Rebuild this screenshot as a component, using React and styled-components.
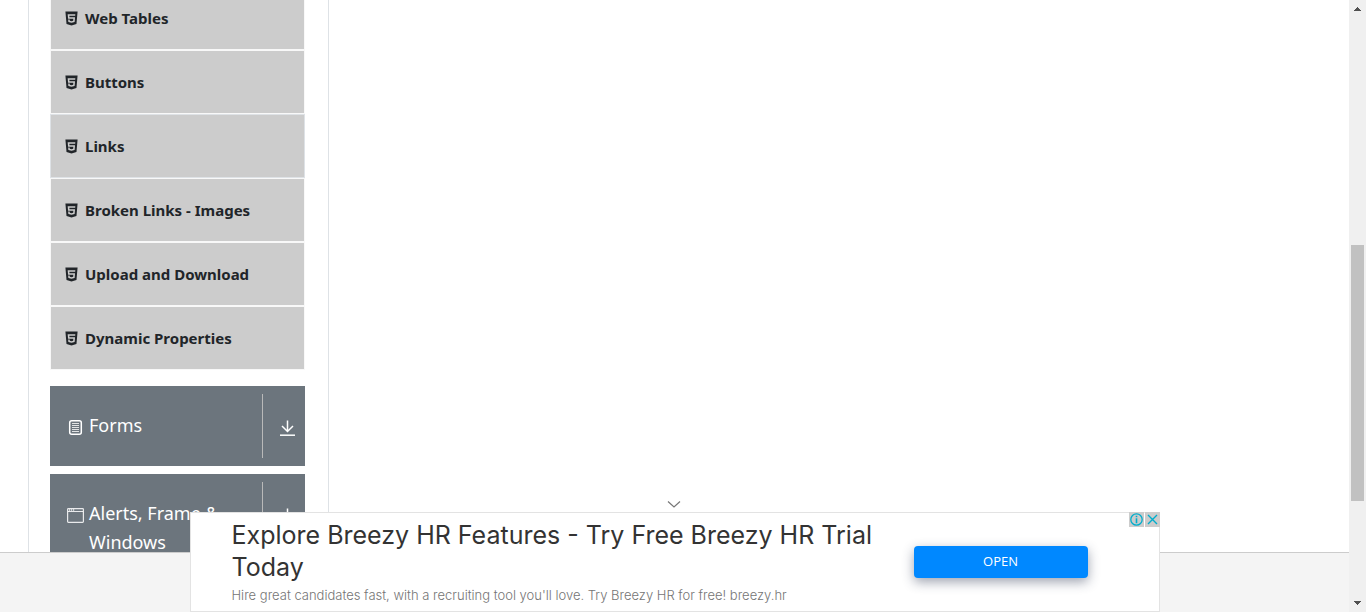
import React from "react";
import styled, { createGlobalStyle } from "styled-components";
import { AiFillHtml5 } from "react-icons/ai";

const ui = `"Noto Sans", "Open Sans", sans-serif`;
const adFont = `Inter, "Open Sans", sans-serif`;

const GlobalStyle = createGlobalStyle`
  *, *::before, *::after { box-sizing: border-box; }
  body { margin: 0; background: #fff; color: #212529; font-family: ${ui}; font-size: 16px; }
  ul, h2, p { margin: 0; padding: 0; }
`;

const Screen = styled.div`
  position: relative;
  display: flex;
  height: 100vh;
  overflow: hidden;
`;

const Page = styled.div`
  flex: 1;
  min-width: 0;
  display: flex;
  flex-direction: column;
`;

const Body = styled.main`
  flex: 1;
  min-height: 0;
  display: flex;
  overflow: hidden;
  padding-left: 28px;
`;

const Sidebar = styled.nav`
  display: flex;
  flex-direction: column;
  gap: 8px;
  width: 301px;
  height: max-content;
  min-height: 100%;
  padding: 0 23px 24px 21px;
  margin-top: -14px;
  border: solid #dee2e6;
  border-width: 0 1px;
`;

const MenuList = styled.ul`
  list-style: none;
  margin-bottom: 8px;
`;

const MenuItem = styled.li`
  height: 64px;
  background: #ccc;
  border: 1px solid ${(p) => (p.$active ? "#dee2e6" : "#f8f8f8")};
`;

const MenuLink = styled.a`
  display: flex;
  align-items: center;
  gap: 5px;
  height: 100%;
  padding-left: 12px;
  color: #212529;
  font-size: 15px;
  font-weight: 700;
  line-height: 24px;
  text-decoration: none;
`;

const GroupButton = styled.button`
  display: flex;
  align-items: stretch;
  min-height: 80px;
  padding: 8px 0;
  border: 0;
  background: #6c757d;
  color: #fff;
  font: 400 18px/29px ${ui};
  text-align: left;
`;

const GroupLabel = styled.span`
  flex: 1;
  display: flex;
  align-items: flex-start;
  gap: 5px;
  padding: 17px 16px 13px 17px;

  svg { flex: none; margin-top: 8px; }
`;

const GroupToggle = styled.span`
  display: flex;
  align-items: flex-start;
  justify-content: center;
  width: 43px;
  padding: 26px 0 0 6px;
  border-left: 1px solid #b9b9b9;
`;

const Footer = styled.footer`
  flex: none;
  height: 60px;
  background: #f4f4f4;
  border-top: 1px solid #ccc;
`;

const ScrollBar = styled.div`
  display: flex;
  flex-direction: column;
  align-items: center;
  width: 17px;
  background: #f0f0f0;
`;

const ScrollArrow = styled.svg`
  flex: none;
  width: 17px;
  height: 17px;
`;

const Gap = styled.div`
  flex: ${(p) => p.$grow};
`;

const Thumb = styled.div`
  flex: 256;
  width: 13px;
  background: #c1c1c1;
`;

const AdDock = styled.div`
  position: absolute;
  left: 0;
  right: 17px;
  bottom: 0;
  display: flex;
  flex-direction: column;
  align-items: center;
`;

const Collapse = styled.button`
  display: flex;
  justify-content: center;
  align-items: center;
  width: 42px;
  height: 16px;
  padding: 0 2px 0 0;
  border: 0;
  background: none;
`;

const Ad = styled.section`
  position: relative;
  display: flex;
  align-items: center;
  width: 100%;
  max-width: 970px;
  height: 100px;
  padding: 0 71px 0 41px;
  border: 1px solid #e3e3e3;
  background: #fff;
`;

const AdText = styled.div`
  flex: 1;
  padding: 2px 24px 0 0;
`;

const AdTitle = styled.h2`
  color: #333;
  font: 400 25px/32px ${adFont};
`;

const AdNote = styled.p`
  color: #757575;
  font: 300 13px/24px ${adFont};
`;

const OpenButton = styled.button`
  width: 174px;
  height: 32px;
  border: 0;
  border-radius: 4px;
  background: #08f;
  box-shadow: 0 4px 12px rgba(40, 50, 80, 0.45);
  color: #fff;
  font: 400 13px/30px "Open Sans", sans-serif;
  padding: 0 0 2px;
`;

const AdChoices = styled.div`
  position: absolute;
  top: -1px;
  right: -1px;
  display: flex;
  gap: 1px;
`;

const ChoiceButton = styled.button`
  display: flex;
  padding: 0;
  border: 0;
  background: #ccc;
`;

const FormIcon = () => (
  <svg width="17" height="17" viewBox="0 0 17 17" fill="none" stroke="#fff">
    <rect x="2.7" y="1.7" width="11.6" height="13.6" rx="2" strokeWidth="1.5" />
    <path d="M5 4.5h7M5 6.5h7M5 8.5h7M5 10.5h7M5 12.5h7" strokeWidth="0.8" />
  </svg>
);

const WindowIcon = () => (
  <svg width="17" height="17" viewBox="0 0 17 17" fill="none" stroke="#fff" strokeOpacity="0.85">
    <rect x="0.6" y="1.6" width="15.8" height="13.8" rx="0.8" strokeWidth="1.2" />
    <path d="M1 4.5h15" />
    <path d="M2 3h1.2M4 3h1.2M6 3h1.2" strokeWidth="1.4" />
  </svg>
);

const ExpandIcon = () => (
  <svg width="17" height="17" viewBox="0 0 17 17" fill="none" stroke="#fff" strokeWidth="1.5">
    <path d="M8.5 0.5v11M3 6l5.5 5.5L14 6" />
    <path d="M1 15.2h15" />
  </svg>
);

const items = [
  "Web Tables",
  "Buttons",
  "Links",
  "Broken Links - Images",
  "Upload and Download",
  "Dynamic Properties",
];

const groups = [
  { label: "Forms", Icon: FormIcon },
  { label: "Alerts, Frame & Windows", Icon: WindowIcon },
];

export default function App() {
  return (
    <Screen>
      <GlobalStyle />
      <Page>
        <Body>
          <Sidebar>
            <MenuList>
              {items.map((name) => (
                <MenuItem key={name} $active={name === "Links"}>
                  <MenuLink href="#">
                    <AiFillHtml5 size={17} />
                    {name}
                  </MenuLink>
                </MenuItem>
              ))}
            </MenuList>
            {groups.map(({ label, Icon }) => (
              <GroupButton key={label} type="button">
                <GroupLabel>
                  <Icon />
                  <span>{label}</span>
                </GroupLabel>
                <GroupToggle>
                  <ExpandIcon />
                </GroupToggle>
              </GroupButton>
            ))}
          </Sidebar>
        </Body>
        <Footer />
      </Page>

      <ScrollBar aria-hidden="true">
        <ScrollArrow viewBox="0 0 17 17" fill="#505050">
          <path d="M8 7h1v1h1v1h1v1h1v1H5v-1h1v-1h1V8h1z" />
        </ScrollArrow>
        <Gap $grow={228} />
        <Thumb />
        <Gap $grow={94} />
        <ScrollArrow viewBox="0 0 17 17" fill="#505050">
          <path d="M5 6h7v1h-1v1h-1v1H9v1H8V9H7V8H6V7H5z" />
        </ScrollArrow>
      </ScrollBar>

      <AdDock>
        <Collapse type="button" aria-label="Collapse ad">
          <svg width="14" height="8" viewBox="0 0 14 8" fill="none" stroke="#777" strokeWidth="1.2">
            <path d="M1 1.5l6 5.5 6-5.5" />
          </svg>
        </Collapse>
        <Ad>
          <AdText>
            <AdTitle>Explore Breezy HR Features - Try Free Breezy HR Trial Today</AdTitle>
            <AdNote>
              Hire great candidates fast, with a recruiting tool you'll love. Try Breezy HR for free! breezy.hr
            </AdNote>
          </AdText>
          <OpenButton type="button">OPEN</OpenButton>
          <AdChoices>
            <ChoiceButton type="button" aria-label="Ad information">
              <svg width="15" height="15" viewBox="0 0 15 15" fill="none" stroke="#00aecd" strokeWidth="1.3">
                <circle cx="7.5" cy="7.5" r="5.7" />
                <path d="M7.5 6.3v5M7.5 3.8v1.4" strokeWidth="1.6" />
              </svg>
            </ChoiceButton>
            <ChoiceButton type="button" aria-label="Close ad">
              <svg width="15" height="15" viewBox="0 0 15 15" fill="none" stroke="#00aecd" strokeWidth="1.4">
                <path d="M3 3l9 9M12 3l-9 9" />
              </svg>
            </ChoiceButton>
          </AdChoices>
        </Ad>
      </AdDock>
    </Screen>
  );
}
